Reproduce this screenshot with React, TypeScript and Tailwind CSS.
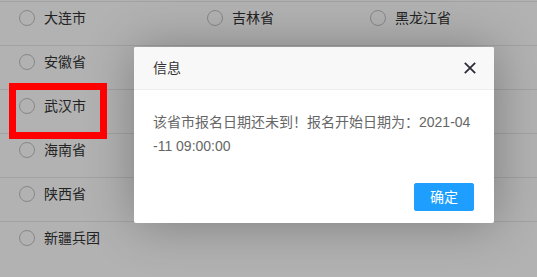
import React from "react";

// Lista de regiões (fundo da página, atrás do diálogo)
const linhas: string[][] = [
  ["大连市", "吉林省", "黑龙江省"],
  ["安徽省"],
  ["武汉市"],
  ["海南省"],
  ["陕西省"],
  ["新疆兵团"],
];

const larguras = ["w-[188px]", "w-[163px]", "w-[163px]"];

function Radio({ nome, largura }: { nome: string; largura: string }) {
  return (
    <label className={`flex items-center h-[16px] ${largura}`}>
      <span className="w-[16px] h-[16px] rounded-full border border-[#c2c2c2] bg-white shrink-0" />
      <span className="ml-[9px] text-[14px] leading-[16px] text-[#333]">{nome}</span>
    </label>
  );
}

export default function App() {
  return (
    <div className="relative w-[537px] h-[277px] overflow-hidden bg-white font-['Liberation_Sans','Noto_Sans_CJK_SC',sans-serif]">
      {/* página */}
      <div className="pt-px">
        {linhas.map((linha, i) => (
          <div key={i} className="h-[44px] pl-[19px] pt-[8px] flex items-start border-t border-[#e8e8e8]">
            {linha.map((nome, j) => (
              <Radio key={nome} nome={nome} largura={larguras[j]} />
            ))}
          </div>
        ))}
      </div>

      {/* sombra do layer */}
      <div className="absolute inset-0 bg-black/30" />

      {/* diálogo */}
      <div className="absolute left-[134px] top-[47px] w-[360px] bg-white rounded-[2px] shadow-[1px_1px_50px_rgba(0,0,0,0.3)]">
        <div className="relative h-[43px] bg-[#f8f8f8] border-b border-[#eee] pl-[19px] text-[14px] leading-[42px] text-[#333] rounded-t-[2px]">
          信息
          <svg
            className="absolute right-[18px] top-[15px]"
            width="12"
            height="12"
            viewBox="0 0 12 12"
          >
            <path d="M0.8 0.8 L11.2 11.2 M11.2 0.8 L0.8 11.2" stroke="#2e2d3c" strokeWidth="1.8" />
          </svg>
        </div>
        <div className="px-[19px] py-[20px] text-[14px] leading-[24px] text-[#666]">
          该省市报名日期还未到！报名开始日期为：2021-04
          <br />
          -11 09:00:00
        </div>
        <div className="flex justify-end px-[15px] pb-[12px]">
          <button className="mt-[5px] mx-[5px] h-[28px] px-[15px] border border-[#1e9fff] bg-[#1e9fff] text-white text-[14px] leading-[26px] rounded-[2px]">
            确定
          </button>
        </div>
      </div>

      {/* destaque vermelho */}
      <div className="absolute left-[9px] top-[83px] w-[98px] h-[56px] border-[7px] border-[#ff0000]" />
    </div>
  );
}
